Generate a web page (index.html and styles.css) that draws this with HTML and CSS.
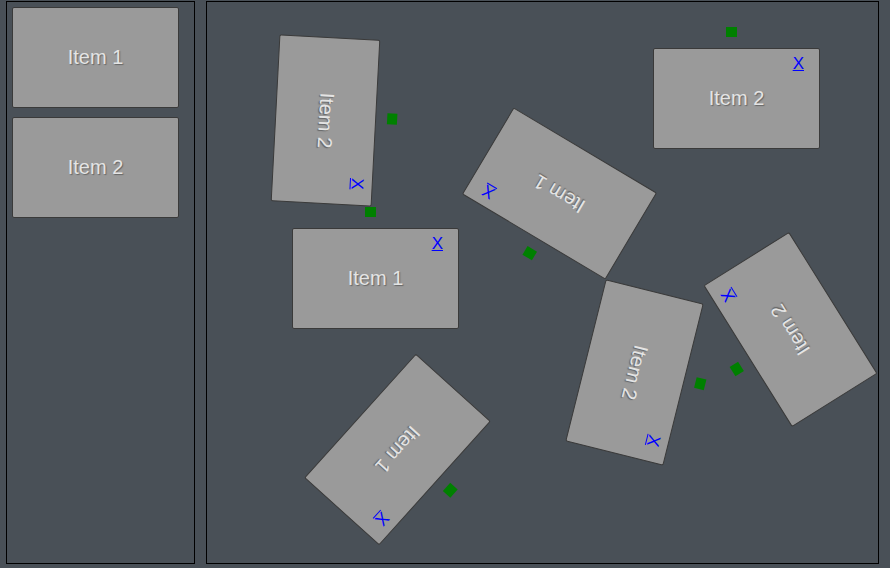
FILE: index.html
```html
<!DOCTYPE html>
<html>
<head>
<meta charset="utf-8">
<link rel="stylesheet" href="styles.css">
</head>
<body>
<div class="layout">
  <div class="palette">
    <div class="item">Item 1</div>
    <div class="item">Item 2</div>
  </div>
  <div class="canvas">
    <div class="item placed" style="left:35px;top:67.5px;transform:rotate(93deg)">Item 2<span class="handle"></span><a href="#" class="close">X</a></div>
    <div class="item placed" style="left:446px;top:46px">Item 2<span class="handle"></span><a href="#" class="close">X</a></div>
    <div class="item placed" style="left:85px;top:226px">Item 1<span class="handle"></span><a href="#" class="close">X</a></div>
    <div class="item placed" style="left:268.7px;top:140.7px;transform:rotate(210.8deg)">Item 1<span class="handle"></span><a href="#" class="close">X</a></div>
    <div class="item placed" style="left:499.8px;top:277px;transform:rotate(238deg)">Item 2<span class="handle"></span><a href="#" class="close">X</a></div>
    <div class="item placed" style="left:343.6px;top:319.9px;transform:rotate(104deg)">Item 2<span class="handle"></span><a href="#" class="close">X</a></div>
    <div class="item placed" style="left:106.9px;top:396.7px;transform:rotate(132deg)">Item 1<span class="handle"></span><a href="#" class="close">X</a></div>
  </div>
</div>
</body>
</html>
```
FILE: styles.css
```css
html, body {
  margin: 0;
  padding: 0;
  background: #495057;
  font-family: "Liberation Sans", Arial, sans-serif;
}

.layout {
  display: flex;
  gap: 11px;
  padding: 1px 0 0 6px;
}

.palette {
  box-sizing: border-box;
  width: 189px;
  height: 563px;
  border: 1px solid #000;
  padding: 5px;
  display: flex;
  flex-direction: column;
  gap: 9px;
}

.canvas {
  box-sizing: border-box;
  position: relative;
  width: 673px;
  height: 563px;
  border: 1px solid #000;
}

.item {
  box-sizing: border-box;
  flex: none;
  width: 167px;
  height: 101px;
  background: #9a9a9a;
  border: 1px solid #3a3a3a;
  border-radius: 2px;
  display: flex;
  align-items: center;
  justify-content: center;
  color: #e4e4e4;
  font-size: 20px;
  text-shadow: 1px 1px 1px rgba(60, 60, 60, 0.55);
}

.placed {
  position: absolute;
  transform-origin: 50% 50%;
}

.handle {
  position: absolute;
  left: 72px;
  top: -22px;
  width: 11px;
  height: 10px;
  background: #008000;
}

.close {
  position: absolute;
  top: 5px;
  right: 15px;
  font-size: 17px;
  color: #0000ff;
  text-decoration: underline;
  text-shadow: none;
}
```
